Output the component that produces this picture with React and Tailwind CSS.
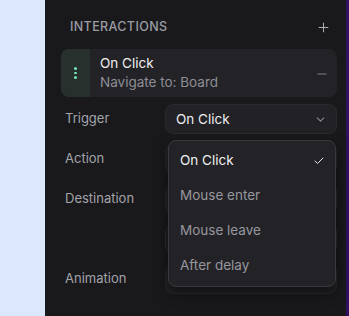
import { Plus, Minus, ChevronDown, Check } from 'lucide-react'

const TRIGGERS = ['On Click', 'Mouse enter', 'Mouse leave', 'After delay']

const Field = ({ label, children }) => (
  <div className="flex items-center h-10">
    <span className="w-[104px] pl-1 text-[13px] text-[#a3a3aa]">{label}</span>
    <div className="flex-1">{children}</div>
  </div>
)

// boxes hidden under the open menu carry no text
const SelectBox = ({ value }) => (
  <div className="h-[30px] rounded-lg bg-[#222226] border border-[#2a2a2e] flex items-center justify-between pl-[10px] pr-[9px] text-[13.5px] text-[#ededf0]">
    <span>{value}</span>
    <ChevronDown size={13} className="text-[#8a8a92]" />
  </div>
)

export default function App() {
  return (
    <div className="flex h-[316px] w-[349px] overflow-hidden" style={{ fontFamily: 'Inter, "Noto Sans", sans-serif' }}>
      <div className="w-[45px] bg-[#dbe8fc]" />
      <div className="relative w-[301px] bg-[#19191c] pl-4 pr-[9px]">
        <div className="flex items-center justify-between h-[49px] pl-[9px] pr-[6px] pt-[6px]">
          <span className="text-[12.5px] tracking-[0.03em] text-[#9c9ca4] font-medium">INTERACTIONS</span>
          <Plus size={15} strokeWidth={1.5} className="text-[#b8b8be]" />
        </div>

        <div className="flex h-[48px] rounded-lg bg-[#232327] overflow-hidden">
          <div className="w-[29px] bg-[#28302d] flex flex-col items-center justify-center gap-[2px]">
            <span className="w-[2.5px] h-[2.5px] rounded-full bg-[#6ee7b7]" />
            <span className="w-[2.5px] h-[2.5px] rounded-full bg-[#6ee7b7]" />
            <span className="w-[2.5px] h-[2.5px] rounded-full bg-[#6ee7b7]" />
          </div>
          <div className="flex-1 pl-[10px] pt-[5px] leading-[19px]">
            <div className="text-[13.5px] text-[#f0f0f2]">On Click</div>
            <div className="text-[13.5px] text-[#8e8e96]">Navigate to: Board</div>
          </div>
          <div className="flex items-center pr-[8px] pt-[2px]">
            <Minus size={14} strokeWidth={1.5} className="text-[#8a8a92]" />
          </div>
        </div>

        <div className="pt-[2px]">
          <Field label="Trigger"><SelectBox value="On Click" /></Field>
          <Field label="Action"><SelectBox value="" /></Field>
          <Field label="Destination"><SelectBox value="" /></Field>
          <div className="flex items-center h-10">
            <span className="w-[104px]" />
            <div className="flex-1 h-[30px] rounded-lg bg-[#1f1f23] border border-[#2c2c30]" />
          </div>
          <Field label="Animation"><SelectBox value="" /></Field>
        </div>

        <div className="absolute left-[123px] top-[140px] w-[168px] h-[147px] rounded-lg bg-[#232327] border border-[#38383d] shadow-[0_6px_14px_rgba(0,0,0,0.55)] py-[2px]">
          {TRIGGERS.map((t, i) => (
            <div key={t} className="h-[35px] flex items-center justify-between pl-[11px] pr-[10px]">
              <span className={`text-[13.5px] ${i === 0 ? 'text-[#f0f0f2]' : 'text-[#96969e]'}`}>{t}</span>
              {i === 0 && <Check size={12} strokeWidth={2} className="text-[#e4e4e7]" />}
            </div>
          ))}
        </div>
      </div>
      <div className="flex-1 bg-[#2e1160]" />
    </div>
  )
}
